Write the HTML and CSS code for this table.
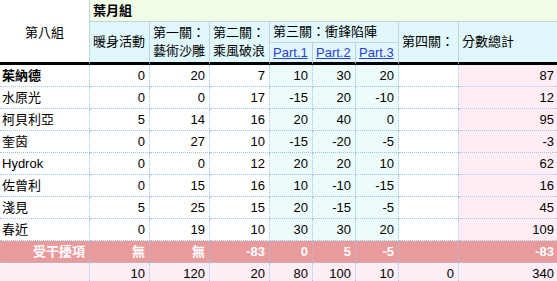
FILE: index.html
```html
<!DOCTYPE html>
<html lang="zh-Hant">
<head>
<meta charset="utf-8">
<title>第八組</title>
<link rel="stylesheet" href="styles.css">
</head>
<body>
<table class="sheet">
  <colgroup>
    <col class="c-name">
    <col class="c-mid"><col class="c-mid"><col class="c-mid">
    <col class="c-part"><col class="c-part"><col class="c-part">
    <col class="c-mid">
    <col class="c-total">
  </colgroup>
  <thead>
    <tr class="r1">
      <th rowspan="3" class="corner">第八組</th>
      <th colspan="8" class="team">葉月組</th>
    </tr>
    <tr class="r2">
      <th rowspan="2" class="span">暖身活動</th>
      <th rowspan="2" class="span two">第一關：<br>藝術沙雕</th>
      <th rowspan="2" class="span two">第二關：<br>乘風破浪</th>
      <th colspan="3" class="stage">第三關：衝鋒陷陣</th>
      <th rowspan="2" class="span">第四關：</th>
      <th rowspan="2" class="span">分數總計</th>
    </tr>
    <tr class="r3">
      <th class="part"><a href="#p1">Part.1</a></th>
      <th class="part"><a href="#p2">Part.2</a></th>
      <th class="part"><a href="#p3">Part.3</a></th>
    </tr>
  </thead>
  <tbody>
    <tr><td class="name strong">茱納德</td><td>0</td><td>20</td><td>7</td><td class="p">10</td><td class="p">30</td><td class="p">20</td><td></td><td class="sum">87</td></tr>
    <tr><td class="name">水原光</td><td>0</td><td>0</td><td>17</td><td class="p">-15</td><td class="p">20</td><td class="p">-10</td><td></td><td class="sum">12</td></tr>
    <tr><td class="name">柯貝利亞</td><td>5</td><td>14</td><td>16</td><td class="p">20</td><td class="p">40</td><td class="p">0</td><td></td><td class="sum">95</td></tr>
    <tr><td class="name">奎茵</td><td>0</td><td>27</td><td>10</td><td class="p">-15</td><td class="p">-20</td><td class="p">-5</td><td></td><td class="sum">-3</td></tr>
    <tr><td class="name">Hydrok</td><td>0</td><td>0</td><td>12</td><td class="p">20</td><td class="p">20</td><td class="p">10</td><td></td><td class="sum">62</td></tr>
    <tr><td class="name">佐曾利</td><td>0</td><td>15</td><td>16</td><td class="p">10</td><td class="p">-10</td><td class="p">-15</td><td></td><td class="sum">16</td></tr>
    <tr><td class="name">淺見</td><td>5</td><td>25</td><td>15</td><td class="p">20</td><td class="p">-15</td><td class="p">-5</td><td></td><td class="sum">45</td></tr>
    <tr><td class="name">春近</td><td>0</td><td>19</td><td>10</td><td class="p">30</td><td class="p">30</td><td class="p">20</td><td></td><td class="sum">109</td></tr>
    <tr class="penalty"><td>受干擾項</td><td>無</td><td>無</td><td>-83</td><td>0</td><td>5</td><td>-5</td><td></td><td>-83</td></tr>
    <tr class="totals"><td></td><td>10</td><td>120</td><td>20</td><td>80</td><td>100</td><td>10</td><td>0</td><td>340</td></tr>
  </tbody>
</table>
</body>
</html>
```

FILE: styles.css
```css
html, body {
  margin: 0;
  padding: 0;
  background: #ffffff;
  overflow: hidden;
}

.sheet {
  table-layout: fixed;
  width: 559px;
  border-collapse: separate;
  border-spacing: 0;
  font-family: "Liberation Sans", "Noto Sans CJK TC", sans-serif;
  font-size: 13px;
  color: #000;
}

.c-name { width: 90px; }
.c-mid { width: 60px; }
.c-part { width: 43px; }
.c-total { width: 100px; }

.sheet th,
.sheet td {
  padding: 0 4px 0 3px;
  overflow: hidden;
  white-space: nowrap;
}

/* header */
.sheet th {
  font-weight: normal;
  text-align: left;
  vertical-align: middle;
  background: #e0f8fc;
  border-right: 1px solid #bfd3dc;
  border-bottom: 1px solid #bfd3dc;
}

.sheet th.corner {
  background: #ffffff;
  text-align: center;
  padding: 0;
  border-bottom: 3px solid #000;
}

.sheet th.team {
  background: #f0fce8;
  font-weight: bold;
  height: 21px;
  line-height: 21px;
}

.sheet th.stage {
  height: 20px;
  line-height: 20px;
}

.sheet th.span {
  border-bottom: 3px solid #000;
  line-height: 18px;
}

.sheet th.part {
  height: 19px;
  line-height: 19px;
  border-bottom: 3px solid #000;
}

.sheet th.part a {
  color: #2b3fd6;
  text-decoration: underline;
}

/* body */
.sheet td {
  height: 21px;
  line-height: 21px;
  text-align: right;
  background: #ffffff;
  border-right: 1px dotted #9ec3e6;
  border-bottom: 1px dotted #9ec3e6;
}

.sheet td.name {
  text-align: left;
  padding-left: 2px;
}

.sheet td.strong {
  font-weight: bold;
}

.sheet td.p {
  background: #edfcfb;
}

.sheet td.sum {
  background: #feeef4;
}

.sheet tr.penalty td {
  background: #e99a9b;
  color: #ffffff;
  font-weight: bold;
}

.sheet tr.totals td {
  background: #fdedf4;
}
```
